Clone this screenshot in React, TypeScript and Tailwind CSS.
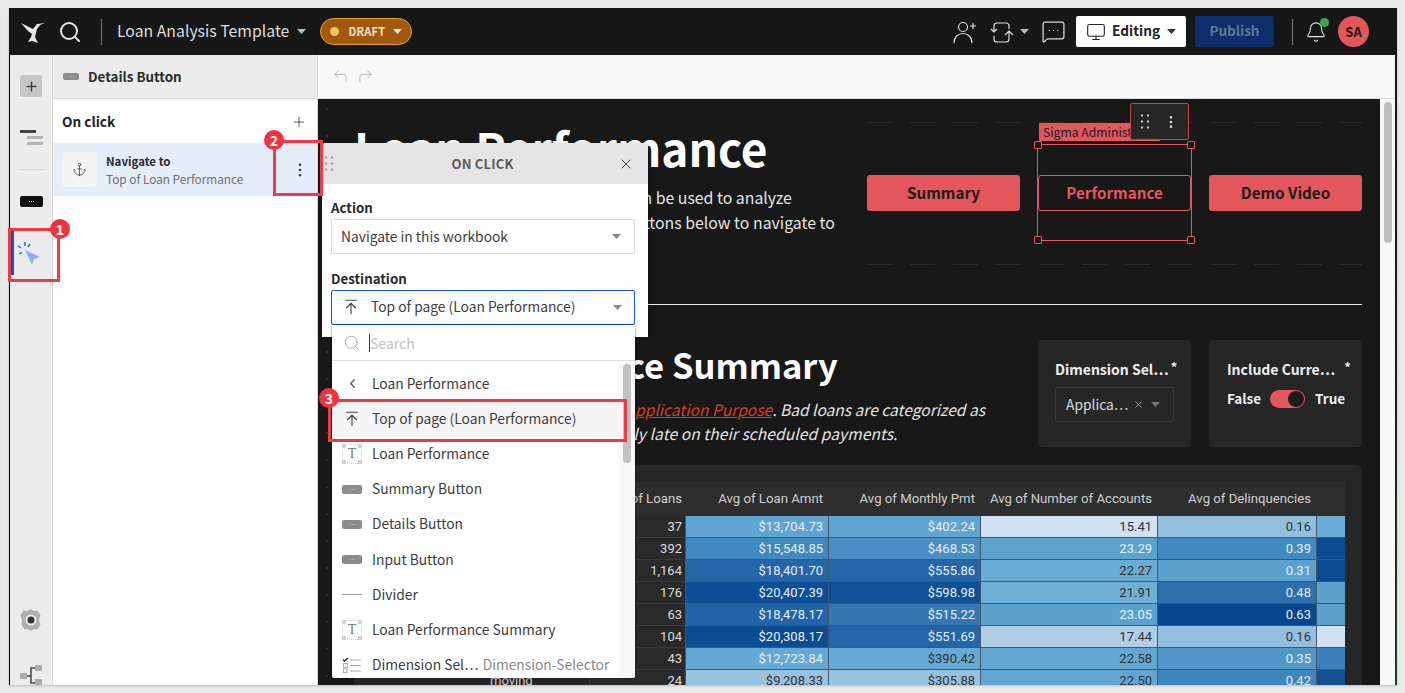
import * as React from "react";
import {
  Anchor,
  ArrowUpToLine,
  Bell,
  ChevronLeft,
  CornerUpLeft,
  CornerUpRight,
  EllipsisVertical,
  MessageSquareMore,
  Monitor,
  Plus,
  Search,
  X,
} from "lucide-react";

const Caret = ({ className = "" }: { className?: string }) => (
  <svg width="9" height="5" viewBox="0 0 9 5" className={className}>
    <path d="M0 0h9L4.500 5z" fill="currentColor" />
  </svg>
);

const Grip = ({ className = "" }: { className?: string }) => (
  <svg width="8" height="15" viewBox="0 0 8 15" className={className}>
    {[1, 7].map((x) =>
      [1.500, 7.500, 13.500].map((y) => (
        <rect key={`${x}-${y}`} x={x - 1} y={y - 1} width="2" height="2" fill="currentColor" />
      )),
    )}
  </svg>
);

const ButtonGlyph = ({ size = "md" }: { size?: "sm" | "md" | "dark" }) => {
  const box =
    size === "dark"
      ? "h-[11px] w-[23px] bg-[#111111]"
      : size === "sm"
        ? "h-[7px] w-[16px] bg-[#8c8c8c]"
        : "h-[9px] w-[20px] bg-[#8c8c8c]";
  const dot = size === "dark" ? "bg-white" : "bg-[#bbbbbb]";
  return (
    <span className={`flex items-center justify-center gap-[1px] rounded-[2px] ${box}`}>
      <i className={`h-[1px] w-[1px] ${dot}`} />
      <i className={`h-[1px] w-[1px] ${dot}`} />
      <i className={`h-[1px] w-[1px] ${dot}`} />
    </span>
  );
};

const TextGlyph = () => (
  <span className="relative flex h-[20px] w-[20px] items-center justify-center border border-dotted border-[#cccccc] font-['Liberation_Serif',serif] text-[14px] leading-none text-[#777777]">
    T
    <i className="absolute -left-[1px] -top-[1px] h-[4px] w-[4px] bg-[#d4d4d4]" />
    <i className="absolute -right-[1px] -top-[1px] h-[4px] w-[4px] bg-[#d4d4d4]" />
    <i className="absolute -bottom-[1px] -left-[1px] h-[4px] w-[4px] bg-[#d4d4d4]" />
    <i className="absolute -bottom-[1px] -right-[1px] h-[4px] w-[4px] bg-[#d4d4d4]" />
  </span>
);

const Badge = ({ n, className }: { n: number; className: string }) => (
  <div
    className={`absolute z-40 flex h-[20px] w-[20px] items-center justify-center rounded-full bg-[#f2323f] text-[14px] font-bold leading-none text-white ${className}`}
  >
    {n}
  </div>
);

const dropdownItems: { icon: React.ReactNode; label: string; sub?: string; active?: boolean }[] = [
  { icon: <ChevronLeft size={15} className="text-[#555555]" />, label: "Loan Performance" },
  { icon: <ArrowUpToLine size={18} strokeWidth={1.500} className="text-[#444444]" />, label: "Top of page (Loan Performance)", active: true },
  { icon: <TextGlyph />, label: "Loan Performance" },
  { icon: <ButtonGlyph />, label: "Summary Button" },
  { icon: <ButtonGlyph />, label: "Details Button" },
  { icon: <ButtonGlyph />, label: "Input Button" },
  { icon: <span className="h-[1px] w-[20px] bg-[#999999]" />, label: "Divider" },
  { icon: <TextGlyph />, label: "Loan Performance Summary" },
  {
    icon: (
      <svg width="20" height="16" viewBox="0 0 20 16" fill="none">
        <path d="M1 2.500l1.500 1.500L6 1" stroke="#222222" strokeWidth="1.300" />
        <path d="M8 3h11M8 8.500h11M8 14h11" stroke="#aaaaaa" strokeWidth="1.200" />
        <rect x="1.500" y="6.500" width="4" height="4" stroke="#aaaaaa" />
        <rect x="1.500" y="12" width="3.500" height="3.500" stroke="#aaaaaa" />
      </svg>
    ),
    label: "Dimension Sel…",
    sub: "Dimension-Selector",
  },
];

const dark = "text-[#333333]";
const light = "text-[#e6eef6]";
const rows: { purpose: string; n: string; cells: [string, string, string][]; end: string }[] = [
  { purpose: "car", n: "37", end: "bg-[#6aaad6]", cells: [["$13,704.73", "bg-[#60a4d1]", light], ["$402.24", "bg-[#60a4d1]", light], ["15.41", "bg-[#cfe1f2]", dark], ["0.16", "bg-[#93bfdf]", dark]] },
  { purpose: "credit card", n: "392", end: "bg-[#0b4a90]", cells: [["$15,548.85", "bg-[#4089c0]", light], ["$468.53", "bg-[#4a8fc3]", light], ["23.29", "bg-[#5ba2cf]", light], ["0.39", "bg-[#4289c0]", light]] },
  { purpose: "debt", n: "1,164", end: "bg-[#0b4a90]", cells: [["$18,401.70", "bg-[#2566a8]", light], ["$555.86", "bg-[#2566a8]", light], ["22.27", "bg-[#6aabd4]", dark], ["0.31", "bg-[#5ba1ce]", light]] },
  { purpose: "home", n: "176", end: "bg-[#5ba1ce]", cells: [["$20,407.39", "bg-[#0d4f96]", light], ["$598.98", "bg-[#0f5197]", light], ["21.91", "bg-[#70afd6]", dark], ["0.48", "bg-[#2e6fad]", light]] },
  { purpose: "house", n: "63", end: "bg-[#5ba1ce]", cells: [["$18,478.17", "bg-[#2165a7]", light], ["$515.22", "bg-[#3478b3]", light], ["23.05", "bg-[#5ba1ce]", light], ["0.63", "bg-[#08478f]", light]] },
  { purpose: "major", n: "104", end: "bg-[#cfe1f2]", cells: [["$20,308.17", "bg-[#0c4c93]", light], ["$551.69", "bg-[#2365a7]", light], ["17.44", "bg-[#b0cee6]", dark], ["0.16", "bg-[#93bfdf]", dark]] },
  { purpose: "medical", n: "43", end: "bg-[#3b80ba]", cells: [["$12,723.84", "bg-[#64a8d3]", light], ["$390.42", "bg-[#66a9d4]", dark], ["22.58", "bg-[#63a7d2]", dark], ["0.35", "bg-[#5097c8]", light]] },
  { purpose: "moving", n: "24", end: "bg-[#11518f]", cells: [["$9,208.33", "bg-[#97c2e0]", dark], ["$305.88", "bg-[#97c2e0]", dark], ["22.50", "bg-[#62a6d2]", dark], ["0.42", "bg-[#3e86be]", light]] },
];

const colWidths = ["w-[143px]", "w-[152px]", "w-[177px]", "w-[159px]"];

function TopBar() {
  return (
    <header className="flex h-[47px] shrink-0 items-center bg-[#171717] text-[#e4e4e4]">
      <svg width="26" height="24" viewBox="0 0 26 24" className="ml-[11px]" fill="#e6e6e6">
        <path d="M1 3l12 6 4-5 8-1-5 2-3 4-2 8 3 6-6-2-4 1 3-5 1-3-4-3z" />
      </svg>
      <Search size={24} strokeWidth={2} className="ml-[12px] text-[#e4e4e4]" />
      <div className="ml-[19px] h-[26px] w-[1px] bg-[#777777]" />
      <span className="mb-[1px] ml-[15px] whitespace-nowrap text-[15.800px] leading-[24px] text-[#dddddd]">Loan Analysis Template</span>
      <Caret className="ml-[8px] text-[#bbbbbb]" />
      <div className="ml-[14px] flex h-[27px] w-[92px] items-center rounded-full border border-[#e6a035] bg-[#a3590c] pl-[9px] text-[11px] font-semibold leading-none tracking-[0.3px] text-[#f3e3cd]">
        <i className="h-[9px] w-[9px] rounded-full bg-[#f5c26b]" />
        <span className="mb-[1px] ml-[9px]">DRAFT</span>
        <Caret className="ml-[7px] text-[#f3e3cd]" />
      </div>
      <div className="ml-auto flex items-center">
        <svg width="24" height="24" viewBox="0 0 24 24" fill="none" stroke="#dddddd" strokeWidth="1.200">
          <circle cx="10" cy="7" r="4.500" />
          <path d="M1 23c0-6 4-9.500 9-9.500s9 3.500 9 9.500M17 6h6M20 3v6" />
        </svg>
        <svg width="24" height="22" viewBox="0 0 24 22" fill="none" stroke="#dddddd" strokeWidth="1.200" className="ml-[13px]">
          <path d="M4 11V5q0-3 3-3h9q3 0 3 3v3M1 8l3 3 3-3M19 13v5q0 3-3 3H7q-3 0-3-3v-3M15 14l4-4 4 4M19 10v8" />
        </svg>
        <Caret className="ml-[6px] text-[#bbbbbb]" />
        <MessageSquareMore size={25} strokeWidth={1.200} className="ml-[12px] text-[#dddddd]" />
        <div className="ml-[10px] flex h-[31px] w-[110px] items-center rounded-[2px] bg-white pl-[10px] text-[13.700px] font-semibold leading-none text-[#222222]">
          <Monitor size={20} strokeWidth={1.300} />
          <span className="mb-[1px] ml-[6px]">Editing</span>
          <Caret className="ml-[7px] text-[#333333]" />
        </div>
        <div className="ml-[9px] flex h-[31px] w-[79px] items-center justify-center rounded-[2px] bg-[#0c2f6c] pb-[1px] text-[13.500px] font-semibold leading-none text-[#5f7896]">
          Publish
        </div>
        <div className="ml-[18px] h-[26px] w-[1px] bg-[#777777]" />
        <div className="relative ml-[12px]">
          <Bell size={22} strokeWidth={1.200} className="text-[#e4e4e4]" />
          <i className="absolute -top-[3px] right-[-2px] h-[9px] w-[9px] rounded-full bg-[#38a653]" />
        </div>
        <div className="ml-[11px] mr-[26px] flex h-[31px] w-[31px] items-center justify-center rounded-full bg-[#e2565c] text-[13px] font-semibold leading-none text-[#1c1c1c]">
          SA
        </div>
      </div>
    </header>
  );
}

function Rail() {
  return (
    <aside className="relative flex w-[44px] shrink-0 flex-col items-center border-l border-r border-l-black border-r-[#d8d8d8] bg-[#ececec]">
      <div className="mt-[20px] flex h-[22px] w-[22px] items-center justify-center rounded-[2px] bg-[#c6c6c6]">
        <Plus size={15} strokeWidth={2.400} className="text-[#444444]" />
      </div>
      <div className="mt-[33px] flex flex-col items-end gap-[3px]">
        <i className="mr-[7px] h-[3px] w-[16px] bg-[#444444]" />
        <i className="h-[3px] w-[16px] bg-[#b4b4b4]" />
        <i className="h-[3px] w-[16px] bg-[#b4b4b4]" />
      </div>
      <div className="mt-[24px] h-[1px] w-[25px] bg-[#d6d6d6]" />
      <div className="mt-[26px] flex">
        <ButtonGlyph size="dark" />
      </div>
      <div className="relative mt-[24px] flex h-[44px] w-full items-center justify-center">
        <i className="absolute left-[1px] top-0 h-[44px] w-[3px] bg-[#0d52d9]" />
        <svg width="24" height="24" viewBox="0 0 24 24" className="mr-[4px] mt-[1px]">
          <path d="M8 8l15 7-6 2-2 6z" fill="#8fb0ef" />
          <path d="M8 0v4M1 4l3 2M13 2l-2 3M2 12l3-2" stroke="#1e66e6" strokeWidth="1.500" fill="none" />
        </svg>
      </div>
      <div className="mt-auto mb-[53px]">
        <svg width="22" height="24" viewBox="0 0 22 24">
          <path d="M11 1l3 2 3.500-.500 3 5-1.500 4.500 1.500 4.500-3 5-3.500-.500-3 2-3-2-3.500.500-3-5L2 12 .5 7.500l3-5L7 3z" fill="#aeaeae" />
          <circle cx="11" cy="12" r="5.500" fill="#ececec" />
          <circle cx="11" cy="12" r="3.500" fill="#333333" />
        </svg>
      </div>
      <svg width="24" height="20" viewBox="0 0 24 20" className="absolute bottom-0">
        <rect x="1" y="8" width="7" height="6" fill="#aeaeae" />
        <rect x="16" y="0" width="7" height="6" fill="#aeaeae" />
        <rect x="16" y="14" width="7" height="6" fill="#aeaeae" />
        <path d="M8 11h4M16 3h-4v15h4" fill="none" stroke="#444444" strokeWidth="1.500" />
      </svg>
    </aside>
  );
}

function Panel() {
  return (
    <section className="flex w-[265px] shrink-0 flex-col border-r border-[#d8d8d8] bg-white">
      <div className="flex h-[44px] shrink-0 items-center border-b border-[#dcdcdc] bg-[#ececec] pl-[10px]">
        <ButtonGlyph size="sm" />
        <span className="ml-[9px] text-[13.400px] font-semibold leading-none text-[#2a2a2a]">Details Button</span>
      </div>
      <div className="flex h-[44px] shrink-0 items-center justify-between pl-[9px] pr-[10px] pt-[1px]">
        <span className="mt-[1px] text-[13.600px] font-semibold leading-none text-[#222222]">On click</span>
        <Plus size={16} strokeWidth={1.300} className="text-[#444444]" />
      </div>
      <div className="flex h-[53px] shrink-0 items-center bg-[#e5edf9] pl-[9px] pr-[8px]">
        <div className="flex h-[35px] w-[35px] items-center justify-center rounded-[4px] bg-[#f4f4f4]">
          <Anchor size={15} strokeWidth={1.300} className="text-[#444444]" />
        </div>
        <div className="ml-[9px] flex flex-col leading-[18px]">
          <span className="text-[11.500px] font-semibold text-[#2a2a2a]">Navigate to</span>
          <span className="text-[11.800px] text-[#6f6f6f]">Top of Loan Performance</span>
        </div>
        <EllipsisVertical size={18} strokeWidth={1.500} className="ml-auto text-[#333333]" />
      </div>
    </section>
  );
}

function Popover() {
  return (
    <>
      <div className="absolute left-[322px] top-[143px] z-20 flex h-[194px] w-[326px] flex-col rounded-t-[4px] bg-white shadow-[0_1px_4px_rgba(0,0,0,0.3)]">
        <div className="relative flex h-[41px] shrink-0 items-center justify-center rounded-t-[4px] bg-[#e5e5e5]">
          <Grip className="absolute left-[3px] text-[#999999]" />
          <span className="mb-[1px] mr-[5px] text-[13px] font-semibold leading-none tracking-[0.2px] text-[#5a5a5a]">ON CLICK</span>
          <X size={16} strokeWidth={1.500} className="absolute right-[14px] text-[#444444]" />
        </div>
        <div className="flex flex-col pl-[9px] pr-[13px]">
          <span className="mt-[15px] text-[13.300px] font-semibold leading-[18px] text-[#2a2a2a]">Action</span>
          <div className="mt-[2px] flex h-[35px] items-center justify-between rounded-[2px] border border-[#d8d8d8] pl-[9px] pr-[13px] text-[13.800px] leading-none text-[#3c3c3c]">
            Navigate in this workbook
            <Caret className="text-[#888888]" />
          </div>
          <span className="mt-[16px] text-[13.300px] font-semibold leading-[18px] text-[#2a2a2a]">Destination</span>
          <div className="mt-[2px] flex h-[35px] items-center rounded-[2px] border border-[#0d57d6] pb-[1px] pl-[10px] pr-[12px] text-[13.800px] leading-none text-[#3c3c3c]">
            <ArrowUpToLine size={18} strokeWidth={1.500} className="text-[#444444]" />
            <span className="ml-[11px]">Top of page (Loan Performance)</span>
            <Caret className="ml-auto text-[#888888]" />
          </div>
        </div>
      </div>

      <div className="absolute left-[332px] top-[325px] z-30 flex h-[353px] w-[303px] flex-col overflow-hidden rounded-b-[2px] bg-white shadow-[0_0_3px_rgba(0,0,0,0.5)]">
        <div className="flex h-[36px] shrink-0 items-center border-b border-[#dddddd] pl-[11px]">
          <Search size={18} strokeWidth={1.300} className="text-[#aaaaaa]" />
          <span className="ml-[8px] border-l border-[#333333] text-[14px] leading-[18px] text-[#c2c2c2]">Search</span>
        </div>
        <div className="relative flex flex-1 flex-col pt-[5px]">
          <div className="absolute bottom-0 right-0 top-0 w-[16px] bg-[#f8f8f8]">
            <i className="absolute left-[4px] top-[3px] h-[99px] w-[8px] rounded-[4px] bg-[#c2c2c2]" />
          </div>
          {dropdownItems.map((item, i) => (
            <div
              key={i}
              className={`flex h-[35.2px] shrink-0 items-center whitespace-nowrap pl-[10px] pr-[18px] text-[13.800px] leading-none text-[#3c3c3c] ${
                item.active ? "bg-[#f5f5f5]" : ""
              }`}
            >
              <span className="flex w-[20px] shrink-0 items-center justify-center">{item.icon}</span>
              <span className="ml-[10px]">{item.label}</span>
              {item.sub && <span className="ml-[4px] text-[#8a8a8a]">{item.sub}</span>}
            </div>
          ))}
        </div>
      </div>

      <div className="absolute left-[8px] top-[228px] z-30 h-[54px] w-[52px] border-[3px] border-[#f03a47]" />
      <div className="absolute left-[273px] top-[140px] z-30 h-[56px] w-[50px] border-[3px] border-[#f03a47]" />
      <div className="absolute left-[328px] top-[399px] z-30 h-[43px] w-[299px] border-[3px] border-[#f03a47]" />
      <Badge n={1} className="left-[50px] top-[219px]" />
      <Badge n={2} className="left-[264px] top-[130px]" />
      <Badge n={3} className="left-[319px] top-[388px]" />
    </>
  );
}

function Handle({ className }: { className: string }) {
  return <i className={`absolute h-[8px] w-[8px] rounded-[1px] border border-[#e2565c] bg-[#181818] ${className}`} />;
}

function Dashes() {
  return (
    <div className="h-[1px] w-[495px] bg-[repeating-linear-gradient(90deg,#2b2b2b_0_25px,transparent_25px_43px)]" />
  );
}

function NavButtons() {
  return (
    <div className="flex flex-col gap-[52px] self-start pt-[23px]">
      <Dashes />
      <div className="flex gap-[18px] pb-[1px]">
        <div className="flex h-[36px] w-[153px] items-center justify-center rounded-[3px] bg-[#e2565c] pb-[1px] text-[15.200px] font-semibold leading-none text-[#1c1c1c]">
          Summary
        </div>
        <div className="relative flex h-[36px] w-[153px] items-center justify-center rounded-[3px] border border-[#e2565c] pb-[1px] text-[15.200px] font-semibold leading-none text-[#e2565c]">
          Performance
          <div className="absolute -bottom-[31px] -left-[2px] -right-[2px] -top-[32px] border border-[#e2565c]">
            <Handle className="-left-[4px] -top-[4px]" />
            <Handle className="-right-[4px] -top-[4px]" />
            <Handle className="-bottom-[4px] -left-[4px]" />
            <Handle className="-bottom-[4px] -right-[4px]" />
            <div className="absolute left-[1px] top-[-22px] flex h-[18px] w-[121px] items-center rounded-[1px] bg-[#e2565c] pl-[4px] text-[12.200px] font-normal leading-none text-[#1c1c1c]">
              Sigma Administ
            </div>
            <div className="absolute left-[92px] top-[-42px] flex h-[37px] w-[59px] items-center rounded-[2px] border border-[#c5474d] bg-[#262626] pl-[10px] text-[#cccccc]">
              <Grip />
              <EllipsisVertical size={16} strokeWidth={2} className="ml-[14px] text-[#dddddd]" />
            </div>
          </div>
        </div>
        <div className="flex h-[36px] w-[153px] items-center justify-center rounded-[3px] bg-[#e2565c] pb-[1px] text-[15.200px] font-semibold leading-none text-[#1c1c1c]">
          Demo Video
        </div>
      </div>
      <Dashes />
    </div>
  );
}

function Canvas() {
  return (
    <div className="relative flex min-h-0 flex-1 overflow-hidden bg-[#181818] text-white">
      <div className="flex w-[18px] shrink-0 flex-col items-center gap-[25px] pt-[9px]">
        {Array.from({ length: 22 }).map((_, i) => (
          <i key={i} className="h-[2px] w-[2px] shrink-0 bg-[#333333]" />
        ))}
      </div>
      <div className="flex min-w-0 flex-1 flex-col pl-[18px] pr-[18px]">
        <div className="flex h-[206px] shrink-0 justify-between border-b border-[#eeeeee]">
          <div className="w-[490px]">
            <h1 className="mt-[18px] whitespace-nowrap text-[46px] font-semibold leading-[60px] text-white">Loan Performance</h1>
            <p className="mt-[8px] whitespace-nowrap text-[15.850px] leading-[25px] text-[#e4e4e4]">
              This loan review workbook template can be used to analyze
              <br />
              loan performance data. Now use the buttons below to navigate to
            </p>
          </div>
          <NavButtons />
        </div>
        <div className="flex h-[160px] shrink-0 justify-between">
          <div>
            <h2 className="mt-[36px] whitespace-nowrap text-[34.500px] font-semibold leading-[46px] text-white">Loan Performance Summary</h2>
            <p className="mt-[10px] whitespace-nowrap text-[15.550px] italic leading-[24px] text-[#e4e4e4]">
              Loan performance is shown below by{" "}
              <span className="text-[#d6401f] underline">Application Purpose</span>. Bad loans are categorized as
              <br />
              <span className="tracking-[0.08px]">loans where the borrowers are currently late on their scheduled payments.</span>
            </p>
          </div>
          <div className="flex gap-[18px] pt-[35px]">
            <div className="flex h-[107px] w-[153px] flex-col rounded-[4px] bg-[#262626] px-[17px] pt-[20px]">
              <div className="flex items-start whitespace-nowrap text-[14px] font-semibold leading-[18px] text-[#eeeeee]">
                Dimension Sel…<span className="ml-[2px] text-[13px] leading-[13px]">*</span>
              </div>
              <div className="mt-[9px] flex h-[35px] items-center rounded-[2px] border border-[#3a3a3a] pl-[10px] pr-[13px] text-[13.800px] leading-none text-[#dddddd]">
                Applica…
                <X size={11} className="ml-[5px] text-[#aaaaaa]" />
                <Caret className="ml-auto text-[#777777]" />
              </div>
            </div>
            <div className="flex h-[107px] w-[153px] flex-col rounded-[4px] bg-[#262626] pl-[18px] pt-[20px]">
              <div className="flex items-start whitespace-nowrap text-[14px] font-semibold leading-[18px] text-[#eeeeee]">
                Include Curre…<span className="ml-[9px] text-[13px] leading-[13px]">*</span>
              </div>
              <div className="mt-[9px] flex h-[24px] items-center text-[13.500px] font-semibold leading-none text-[#eeeeee]">
                False
                <span className="ml-[9px] flex h-[18px] w-[35px] items-center justify-end rounded-full bg-[#e2565c] pr-[1px]">
                  <i className="h-[16px] w-[16px] rounded-full bg-[#1c1c1c]" />
                </span>
                <span className="ml-[10px]">True</span>
              </div>
            </div>
          </div>
        </div>
        <div className="flex-1 rounded-t-[6px] bg-[#262626] px-[17px] pt-[17px]">
          <div className="flex h-[34px] items-center bg-[#2e2e2e] pb-[1px] font-['Roboto',sans-serif] text-[13.200px] leading-none text-[#d0d0d0]">
            <span className="w-[314px] pr-[3px] text-right">Count of Loans</span>
            <span className="w-[143px] pr-[5px] text-right">Avg of Loan Amnt</span>
            <span className="w-[152px] pr-[5px] text-right">Avg of Monthly Pmt</span>
            <span className="w-[177px] pr-[5px] text-right">Avg of Number of Accounts</span>
            <span className="w-[159px] pr-[5px] text-right">Avg of Delinquencies</span>
          </div>
          {rows.map((r) => (
            <div key={r.n} className="flex h-[22px] font-['Roboto',sans-serif] text-[13px] leading-none">
              <span className="w-[110px] border-b border-[#3a3a3a] bg-[#262626]" />
              <span className="flex w-[109px] items-center border-b border-r border-[#3a3a3a] bg-[#262626] pl-[9px] text-[#cccccc]">{r.purpose}</span>
              <span className="flex w-[95px] items-center justify-end border-b border-[#3a3a3a] bg-[#2a2a2a] pb-[1px] pr-[3px] text-[#dddddd]">{r.n}</span>
              {r.cells.map(([v, bg, fg], i) => (
                <span
                  key={i}
                  className={`flex items-center justify-end border-b border-l border-[#47566a] pb-[1px] pr-[5px] ${colWidths[i]} ${bg} ${fg}`}
                >
                  {v}
                </span>
              ))}
              <span className={`flex-1 border-b border-l border-[#47566a] ${r.end}`} />
            </div>
          ))}
        </div>
      </div>
    </div>
  );
}

export default function App() {
  return (
    <div className="relative h-[693px] w-[1405px] overflow-hidden bg-[#e9e9e9] pl-[9px] pt-[8px] font-['Noto_Sans_CJK_JP','Open_Sans',sans-serif]">
      <div className="flex h-[677px] w-[1388px] shadow-[0_1px_2px_rgba(0,0,0,0.2)]">
        <div className="flex w-[1386px] flex-col">
          <TopBar />
          <div className="flex min-h-0 flex-1">
            <Rail />
            <Panel />
            <main className="flex min-w-0 flex-1 flex-col">
              <div className="flex h-[44px] shrink-0 items-center gap-[8px] border-b border-[#dddddd] bg-[#f8f8f8] pl-[14px] text-[#aaaaaa]">
                <CornerUpLeft size={17} strokeWidth={1.200} />
                <CornerUpRight size={17} strokeWidth={1.200} />
              </div>
              <div className="flex min-h-0 flex-1">
                <Canvas />
                <div className="w-[15px] shrink-0 bg-[#f9f9f9] pl-[4px] pt-[3px]">
                  <div className="h-[141px] w-[8px] rounded-[4px] bg-[#bfbfbf]" />
                </div>
              </div>
            </main>
          </div>
        </div>
        <div className="w-[2px] bg-[linear-gradient(180deg,#1d0f1d,#1a1a1a_55%,#0d4a12)]" />
      </div>
      <Popover />
    </div>
  );
}
